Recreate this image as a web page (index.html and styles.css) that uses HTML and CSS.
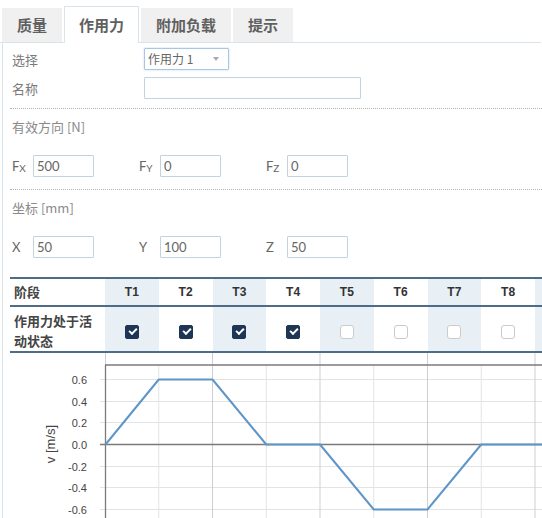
FILE: index.html
```html
<!DOCTYPE html>
<html lang="zh">
<head>
<meta charset="utf-8">
<title>作用力</title>
<link rel="stylesheet" href="styles.css">
</head>
<body>
<div class="tabs">
  <div class="tab">质量</div>
  <div class="tab active">作用力</div>
  <div class="tab">附加负载</div>
  <div class="tab">提示</div>
</div>
<div class="panel">
  <div class="form-row first">
    <span class="label">选择</span>
    <div class="select">作用力 1<span class="caret"></span></div>
  </div>
  <div class="form-row">
    <span class="label">名称</span>
    <input class="field wide" type="text" value="">
  </div>
  <div class="sep"></div>
  <div class="section-title">有效方向 [N]</div>
  <div class="vec-row">
    <div class="vec"><span class="vlabel">F<span class="sub">X</span></span><input class="field small" type="text" value="500"></div>
    <div class="vec"><span class="vlabel">F<span class="sub">Y</span></span><input class="field small" type="text" value="0"></div>
    <div class="vec"><span class="vlabel">F<span class="sub">Z</span></span><input class="field small" type="text" value="0"></div>
  </div>
  <div class="sep"></div>
  <div class="section-title">坐标 [mm]</div>
  <div class="vec-row">
    <div class="vec"><span class="vlabel">X</span><input class="field small" type="text" value="50"></div>
    <div class="vec"><span class="vlabel">Y</span><input class="field small" type="text" value="100"></div>
    <div class="vec"><span class="vlabel">Z</span><input class="field small" type="text" value="50"></div>
  </div>

  <div class="grid-table">
    <div class="trow head">
      <div class="cell first">阶段</div>
      <div class="cell shade">T1</div>
      <div class="cell">T2</div>
      <div class="cell shade">T3</div>
      <div class="cell">T4</div>
      <div class="cell shade">T5</div>
      <div class="cell">T6</div>
      <div class="cell shade">T7</div>
      <div class="cell">T8</div>
      <div class="cell shade"></div>
    </div>
    <div class="trow body">
      <div class="cell first">作用力处于活动状态</div>
      <div class="cell shade"><span class="cb on"></span></div>
      <div class="cell"><span class="cb on"></span></div>
      <div class="cell shade"><span class="cb on"></span></div>
      <div class="cell"><span class="cb on"></span></div>
      <div class="cell shade"><span class="cb"></span></div>
      <div class="cell"><span class="cb"></span></div>
      <div class="cell shade"><span class="cb"></span></div>
      <div class="cell"><span class="cb"></span></div>
      <div class="cell shade"></div>
    </div>
  </div>

  <svg class="chart" width="580" height="180" viewBox="10 352 580 180" xmlns="http://www.w3.org/2000/svg">
    <g stroke="#e3e3e3" stroke-width="1">
      <line x1="158.75" y1="364" x2="158.75" y2="532"/>
      <line x1="266.25" y1="364" x2="266.25" y2="532"/>
      <line x1="373.75" y1="364" x2="373.75" y2="532"/>
      <line x1="481.25" y1="364" x2="481.25" y2="532"/>
      <line x1="100" y1="378.5" x2="590" y2="378.5"/>
      <line x1="100" y1="400.5" x2="590" y2="400.5"/>
      <line x1="100" y1="421.5" x2="590" y2="421.5"/>
      <line x1="100" y1="465.5" x2="590" y2="465.5"/>
      <line x1="100" y1="486.5" x2="590" y2="486.5"/>
      <line x1="100" y1="508.5" x2="590" y2="508.5"/>
    </g>
    <g stroke="#cfcfcf" stroke-width="1">
      <line x1="105.5" y1="352" x2="105.5" y2="364"/>
      <line x1="212.5" y1="352" x2="212.5" y2="532"/>
      <line x1="320" y1="352" x2="320" y2="532"/>
      <line x1="427.5" y1="352" x2="427.5" y2="532"/>
      <line x1="535" y1="352" x2="535" y2="532"/>
    </g>
    <g stroke="#7a7a7a" stroke-width="1.3">
      <line x1="105" y1="364" x2="590" y2="364"/>
      <line x1="100" y1="443.5" x2="590" y2="443.5"/>
      <line x1="105.5" y1="364" x2="105.5" y2="532"/>
    </g>
    <polyline fill="none" stroke="#5e96c8" stroke-width="2" stroke-linejoin="round"
      points="105.5,443.5 158.75,378.5 212.5,378.5 266.25,443.5 320,443.5 373.75,508.5 427.5,508.5 481.25,443.5 535,443.5 590,443.5"/>
    <g class="ticks" text-anchor="end">
      <text x="87" y="382.5">0.6</text>
      <text x="87" y="404.5">0.4</text>
      <text x="87" y="425.5">0.2</text>
      <text x="87" y="447.5">0.0</text>
      <text x="87" y="469.5">-0.2</text>
      <text x="87" y="490.5">-0.4</text>
      <text x="87" y="512.5">-0.6</text>
    </g>
    <text class="axis-title" x="51" y="443" text-anchor="middle" transform="rotate(-90 51 443)" dy="4">v [m/s]</text>
  </svg>
</div>
</body>
</html>
```

FILE: styles.css
```css
html, body {
  margin: 0;
  padding: 0;
  background: #ffffff;
  overflow: hidden;
}

body {
  font-family: "Noto Sans CJK SC", "Noto Sans", sans-serif;
  color: #555;
  width: 542px;
}

.tabs {
  display: flex;
  align-items: flex-end;
  gap: 2px;
  padding: 8px 0 0 2px;
  height: 34px;
  border-bottom: 1px solid #d8e3ec;
  margin-right: 1px;
}

.tab {
  height: 34px;
  line-height: 34px;
  padding: 0 15px;
  background: #f0f0f0;
  font-size: 15px;
  font-weight: 700;
  color: #606060;
  box-sizing: border-box;
}

.tab.active {
  background: #ffffff;
  height: 37px;
  line-height: 36px;
  margin-bottom: -1px;
  border: 1px solid #d8e3ec;
  border-bottom: none;
  padding: 0 14px;
}

.panel {
  margin-left: 2px;
  border-left: 1px solid #d8e3ec;
  padding: 5px 0 0 7px;
  overflow: hidden;
  height: 480px;
}

.form-row {
  display: grid;
  grid-template-columns: 134px auto;
  align-items: center;
  margin-top: 7px;
}

.form-row.first {
  margin-top: 0;
}

.label {
  padding-left: 2px;
  font-size: 13px;
  color: #7a7a7a;
}

.select {
  width: 85px;
  height: 22px;
  box-sizing: border-box;
  border: 1px solid #a9c7e2;
  border-radius: 1px;
  font-size: 12px;
  line-height: 20px;
  padding-left: 3px;
  color: #666;
  display: flex;
  align-items: center;
  box-shadow: 0 0 2px rgba(120, 170, 220, 0.5);
}

.caret {
  margin-left: auto;
  margin-right: 9px;
  width: 0;
  height: 0;
  border-left: 3px solid transparent;
  border-right: 3px solid transparent;
  border-top: 4px solid #aaa;
}

.field {
  height: 22px;
  box-sizing: border-box;
  border: 1px solid #c2d3e0;
  border-radius: 1px;
  padding: 0 3px;
  font-family: "Lato", "Open Sans", sans-serif;
  font-size: 13px;
  color: #666;
  margin: 0;
  outline: none;
}

.field.wide {
  width: 217px;
}

.field.small {
  width: 61px;
}

.sep {
  border-top: 1px dotted #b5b5b5;
  margin-top: 9px;
}

.vec-row + .sep {
  margin-top: 12px;
}

.section-title {
  font-size: 13px;
  line-height: 20px;
  color: #8a8a8a;
  padding-left: 2px;
  margin-top: 8px;
}

.vec-row {
  display: flex;
  margin-top: 18px;
}

.vec {
  display: flex;
  align-items: center;
  width: 127px;
}

.vlabel {
  width: 23px;
  padding-left: 2px;
  box-sizing: border-box;
  font-family: "Lato", "Open Sans", sans-serif;
  font-size: 13px;
  color: #666;
}

.sub {
  font-size: 10px;
  position: relative;
  top: 1px;
}

.grid-table {
  margin-top: 19px;
  width: 580px;
}

.trow {
  display: grid;
  grid-template-columns: 95px repeat(9, 53.75px);
}

.trow.head {
  border-top: 2px solid #4e6c86;
  border-bottom: 2px solid #4e6c86;
  height: 26px;
}

.trow.body {
  border-bottom: 2px solid #4e6c86;
  height: 44px;
}

.cell {
  display: flex;
  align-items: center;
  justify-content: center;
  font-family: "Liberation Sans", Arial, sans-serif;
  font-size: 12px;
  font-weight: 700;
  color: #333;
}

.cell.first {
  justify-content: flex-start;
  padding: 0 8px 0 4px;
  font-family: "Noto Sans CJK SC", sans-serif;
  font-size: 13px;
  line-height: 20px;
  color: #444;
}

.body .cell.first {
  padding-top: 3px;
}

.cell.shade {
  background: #e8eff5;
}

.cb {
  width: 14px;
  height: 14px;
  box-sizing: border-box;
  border: 1px solid #cbcbcb;
  border-radius: 3px;
  background: #fff;
  position: relative;
  margin-top: 5px;
}

.cb.on {
  background: #1e3655;
  border-color: #1e3655;
  border-radius: 2px;
}

.cb.on::after {
  content: "";
  position: absolute;
  left: 3px;
  top: 2px;
  width: 6px;
  height: 3px;
  border-left: 2px solid #fff;
  border-bottom: 2px solid #fff;
  transform: rotate(-45deg);
}

.chart {
  display: block;
  margin-left: 0;
}

.ticks text {
  font-family: "Liberation Sans", Arial, sans-serif;
  font-size: 11px;
  fill: #444;
}

.axis-title {
  font-family: "Liberation Sans", Arial, sans-serif;
  font-size: 13px;
  fill: #444;
}
```
